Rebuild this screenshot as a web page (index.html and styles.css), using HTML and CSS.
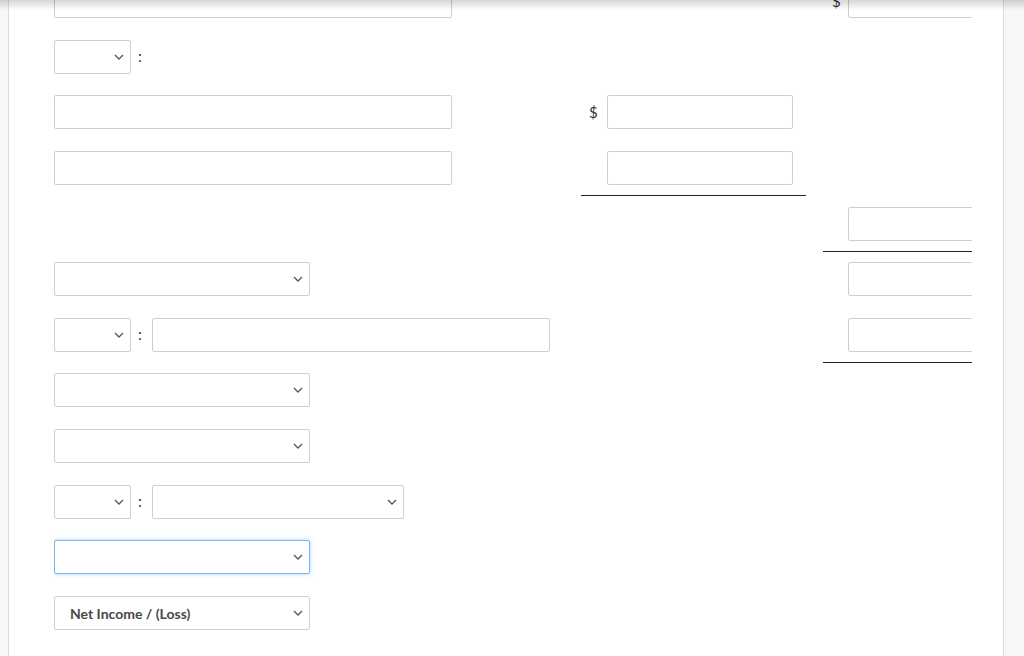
FILE: index.html
```html
<!DOCTYPE html>
<html>
	<head>
		<title>Income Statement</title>
		<link rel="stylesheet" href="styles.css">
	</head>
	<body>
	<div class="top_shade"></div>
	<div class="panel">
		<div class="sheet">
			<!-- row 0, scrolled partly out of view -->
			<div class="row first">
				<div class="col1"><div class="field wide"></div></div>
				<div class="col2"></div>
				<div class="col3"><span class="dollar">$</span><div class="field amount"></div></div>
			</div>
			<div class="row">
				<div class="col1"><div class="select small"><span></span><svg class="chev" viewBox="0 0 10 6"><path d="M1 1 L5 5 L9 1"/></svg></div><span class="colon">:</span></div>
				<div class="col2"></div>
				<div class="col3"></div>
			</div>
			<div class="row">
				<div class="col1"><div class="field wide"></div></div>
				<div class="col2"><span class="dollar">$</span><div class="field amount"></div></div>
				<div class="col3"></div>
			</div>
			<div class="row">
				<div class="col1"><div class="field wide"></div></div>
				<div class="col2 total"><span class="dollar"></span><div class="field amount"></div></div>
				<div class="col3"></div>
			</div>
			<div class="row">
				<div class="col1"></div>
				<div class="col2"></div>
				<div class="col3 total"><span class="dollar"></span><div class="field amount"></div></div>
			</div>
			<div class="row">
				<div class="col1"><div class="select medium"><span></span><svg class="chev" viewBox="0 0 10 6"><path d="M1 1 L5 5 L9 1"/></svg></div></div>
				<div class="col2"></div>
				<div class="col3"><span class="dollar"></span><div class="field amount"></div></div>
			</div>
			<div class="row">
				<div class="col1"><div class="select small"><span></span><svg class="chev" viewBox="0 0 10 6"><path d="M1 1 L5 5 L9 1"/></svg></div><span class="colon">:</span><div class="field wide"></div></div>
				<div class="col2"></div>
				<div class="col3 total"><span class="dollar"></span><div class="field amount"></div></div>
			</div>
			<div class="row">
				<div class="col1"><div class="select medium"><span></span><svg class="chev" viewBox="0 0 10 6"><path d="M1 1 L5 5 L9 1"/></svg></div></div>
				<div class="col2"></div>
				<div class="col3"></div>
			</div>
			<div class="row">
				<div class="col1"><div class="select medium"><span></span><svg class="chev" viewBox="0 0 10 6"><path d="M1 1 L5 5 L9 1"/></svg></div></div>
				<div class="col2"></div>
				<div class="col3"></div>
			</div>
			<div class="row">
				<div class="col1"><div class="select small"><span></span><svg class="chev" viewBox="0 0 10 6"><path d="M1 1 L5 5 L9 1"/></svg></div><span class="colon">:</span><div class="select half"><span></span><svg class="chev" viewBox="0 0 10 6"><path d="M1 1 L5 5 L9 1"/></svg></div></div>
				<div class="col2"></div>
				<div class="col3"></div>
			</div>
			<div class="row">
				<div class="col1"><div class="select medium focused"><span></span><svg class="chev" viewBox="0 0 10 6"><path d="M1 1 L5 5 L9 1"/></svg></div></div>
				<div class="col2"></div>
				<div class="col3"></div>
			</div>
			<div class="row">
				<div class="col1"><div class="select medium"><span class="choice">Net Income / (Loss)</span><svg class="chev" viewBox="0 0 10 6"><path d="M1 1 L5 5 L9 1"/></svg></div></div>
				<div class="col2"></div>
				<div class="col3"></div>
			</div>
		</div>
	</div>
	</body>
</html>
```

FILE: styles.css
```css
html, body {
	margin: 0;
	height: 656px;
	overflow: hidden;
}
body {
	background: #f7f7f7;
	font-family: Lato, "Liberation Sans", sans-serif;
	font-size: 15px;
	color: #333;
}
.top_shade {
	position: fixed;
	top: 0;
	left: 0;
	right: 0;
	height: 10px;
	background: linear-gradient(rgba(0, 0, 0, 0.16), rgba(0, 0, 0, 0));
	z-index: 5;
}
.panel {
	margin: 0 20px 0 8px;
	height: 656px;
	background: #fff;
	border-left: 1px solid #dcdcdc;
	border-right: 1px solid #dcdcdc;
}
.sheet {
	margin-left: 45px;
	width: 918px;
	overflow: hidden;
}
.row {
	display: flex;
	height: 55.65px;
}
.row.first {
	margin-top: -16px;
}
.col1, .col2, .col3 {
	flex-shrink: 0;
	display: flex;
	align-items: flex-start;
}
.col1 {
	width: 527px;
}
.col2 {
	width: 225px;
}
.col3 {
	width: 225px;
	margin-left: 17px;
}
.total {
	height: 44px;
	border-bottom: 1px solid #222;
}
.dollar {
	width: 26px;
	height: 34px;
	line-height: 34px;
	padding-left: 8px;
	box-sizing: border-box;
	flex-shrink: 0;
}
.col3 .dollar {
	width: 25px;
	padding-left: 9px;
}
.field, .select {
	height: 34px;
	box-sizing: border-box;
	border: 1px solid #cfcfcf;
	border-radius: 2px;
	background: #fff;
	flex-shrink: 0;
}
.wide {
	width: 398px;
}
.amount {
	width: 186px;
}
.select {
	display: flex;
	align-items: center;
	justify-content: space-between;
	padding: 0 6px 0 15px;
}
.choice {
	font-size: 14px;
	font-weight: 700;
	color: #484848;
}
.small {
	width: 77px;
}
.medium {
	width: 256px;
}
.half {
	width: 252px;
}
.focused {
	border-color: #7eb4ea;
	box-shadow: 0 0 4px rgba(102, 175, 233, 0.55);
}
.chev {
	width: 10px;
	height: 6px;
	fill: none;
	stroke: #555;
	stroke-width: 1.3;
}
.colon {
	width: 21px;
	height: 34px;
	line-height: 32px;
	padding-left: 7px;
	box-sizing: border-box;
	font-size: 15px;
	color: #333;
}
```
